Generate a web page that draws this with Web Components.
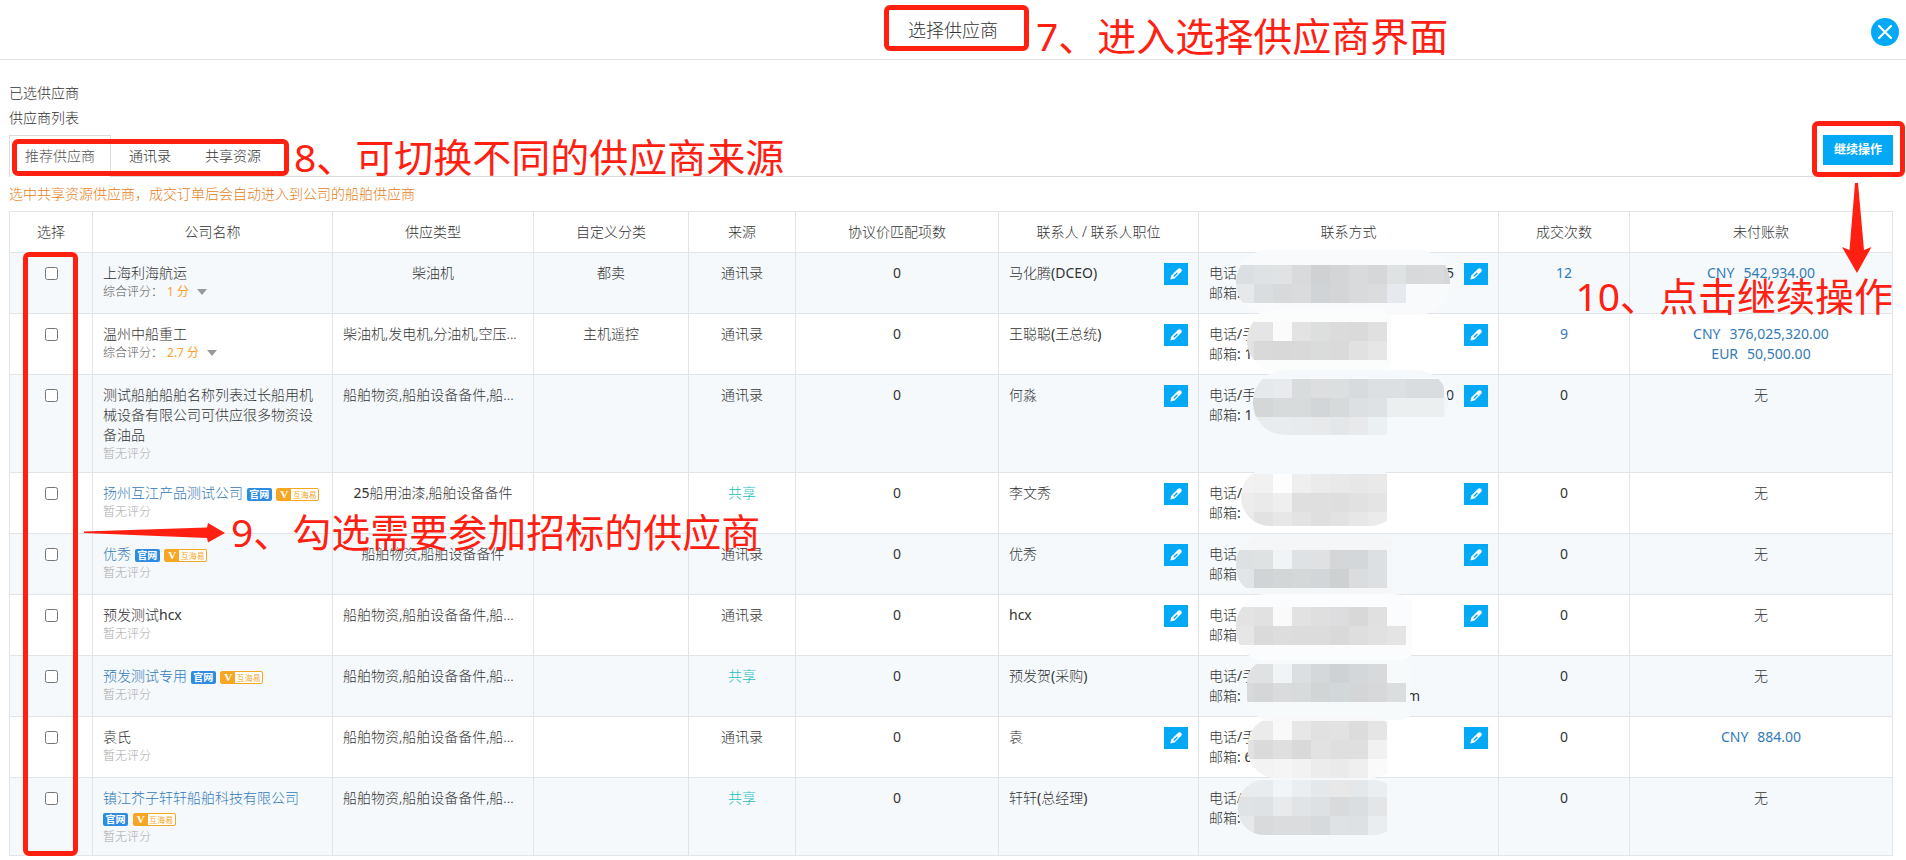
<!DOCTYPE html>
<html lang="zh-CN">
<head>
<meta charset="utf-8">
<meta name="viewport" content="width=device-width, initial-scale=1">
<title>选择供应商</title>
<style>
  body {
    margin: 0;
    background: #fff;
    color: #333;
    font-family: "Noto Sans", "Noto Sans CJK SC", sans-serif;
    font-size: 14px;
    font-weight: 300;
    line-height: 20px;
  }
</style>
</head>
<body>
<supplier-page></supplier-page>

<script>
const define = (name, html, setup) => {
  const tpl = document.createElement('template');
  tpl.innerHTML = html;
  customElements.define(name, class extends HTMLElement {
    constructor() {
      super();
      this.attachShadow({ mode: 'open' }).append(tpl.content.cloneNode(true));
    }
    connectedCallback() {
      if (setup && !this.ready) { this.ready = true; setup(this, this.shadowRoot); }
    }
  });
};

/* Tutorial marks: frame, caption and arrow laid over the page */
define('mark-frame', `
<style>
  :host { position: absolute; box-sizing: border-box; border: 5px solid #ff2012; border-radius: 6px; pointer-events: none; z-index: 2; }
</style>`);

define('mark-caption', `
<style>
  :host { position: absolute; z-index: 3; color: #ff2012; font-size: 39px; line-height: 46px; font-weight: 400; white-space: nowrap; pointer-events: none; }
</style><slot></slot>`);

define('mark-arrow', `
<style>
  :host { position: absolute; z-index: 3; pointer-events: none; }
  svg { display: block; }
  :host([down]) .right, :host(:not([down])) .down { display: none; }
</style>
<svg class="right" width="142" height="20" viewBox="0 0 142 20"><path d="M0 8.5 L123 4.500 L124 0 L141 10 L124 19.500 L123 15 L0 10 Z" fill="#ff2012"/></svg>
<svg class="down" width="30" height="90" viewBox="0 0 30 90"><path d="M13 0 H16 L22 67 L29.500 64 L15 90 L0 64 L7.500 67 Z" fill="#ff2012"/></svg>`);

define('edit-button', `
<style>
  :host { display: block; flex: none; }
  button { display: flex; align-items: center; justify-content: center; width: 24px; height: 22px; padding: 0; border: 0; background: #03a9f4; color: #fff; cursor: pointer; }
</style>
<button type="button" aria-label="编辑">
  <svg width="12" height="12" viewBox="0 0 12 12">
    <path d="M.3 11.600 L1.300 7.600 L7.800 1 Q9.600 -.4 11.200 1 Q12.400 2.600 11 4 L4.500 10.400 Z" fill="currentColor"/>
    <path d="M4.200 7.900 L7 5.200" stroke="#03a9f4" stroke-width="1.400" stroke-linecap="round"/>
  </svg>
</button>`);

define('site-badge', `
<style>
  :host { display: inline-block; vertical-align: middle; }
  a { display: block; box-sizing: border-box; width: 25px; height: 13px; border-radius: 2px; background: #2d8ce2; color: #fff; font-size: 10px; line-height: 13px; font-weight: 700; text-align: center; text-decoration: none; }
</style><a href="#"><slot></slot></a>`);

define('trade-badge', `
<style>
  :host { display: inline-block; vertical-align: middle; margin-left: 1px; }
  a { display: flex; box-sizing: border-box; width: 43px; height: 13px; border: 1px solid #f6a623; border-radius: 2px; color: #f6a623; background: #fff; font-size: 8px; line-height: 11px; font-weight: 400; text-decoration: none; }
  b { width: 14px; background: #f6a623; color: #fff; font: 700 11px/11px "Liberation Serif", serif; text-align: center; }
  span { flex: 1; text-align: center; }
</style><a href="#"><b>V</b><span><slot></slot></span></a>`);

/* Mosaic that covers private contact details; squares are 19px */
const CELL = 19;
const MOSAICS = [
  { x: 37, y: -3, w: 214, h: 65, r: 32, top: 12, bg: '#f8fafb', rows: [
    'dbdfe2 dfe2e4 e0e2e4 d9dadc cfd1d3 d4d5d7 d9dadc d6d7d9 dfe2e3 d8d9db d9dadb d5d6d8'.split(' '),
    'e6e8ea dadddf d8d9da dadbdc d1d4d6 d4d5d7 d9dadc dadcde e6eaee'.split(' ')] },
  { x: 48, y: 56, w: 144, h: 63, r: 32, top: 69, bg: '#fbfcfc', rows: [
    'e5e5e5 e5e5e5 fbfbfb e3e3e4 dddede dbdbdb dadadb e0e0e0'.split(' '),
    'e2e2e2 d9d9da d8d8d9 d9d9d9 dadbdb dadadb e1e1e1 e6e6e6'.split(' ')] },
  { x: 54, y: 117, w: 195, h: 65, r: 32, top: 126, bg: '#f6f9fb', rows: [
    'e6e9eb e6e9eb e8eaed d9dcdd dcdedf dcdfe0 d8dbdd dce0e2 dde0e2 dadddf dadddf'.split(' '),
    'd5d6d8 d5d6d8 d8dbdc d8dbdc d3d6d8 d7dadb dce0e3 dfe2e4 ebeff0 ebeff0 ebeff0 f2f5f7'.split(' '),
    'e7ebee e8ecef e8ecef e7ebee e7e9eb e3e7ea e7e9eb ebf0f3'.split(' ')] },
  { x: 42, y: 215, w: 146, h: 58, r: 29, top: 221, bg: '#f6f9fb', rows: [
    'f2f2f2 f1f1f1 fdfdfd efefef ebebec e9e9ea e7e7e8 e9e9ea'.split(' '),
    'ececec eaeaea efefef dfdfdf dfdfdf dedede e1e1e1 e4e4e4'.split(' '),
    'eaeaea e2e2e2 e7e7e7 e3e3e3 dfdfdf e2e2e2 e7e7e7 ebebeb'.split(' ')] },
  { x: 37, y: 282, w: 156, h: 60, r: 28, top: 297, bg: '#f4f6f8', rows: [
    'dee1e3 dfe2e3 f0f4f7 dfe2e5 dfe1e3 d5d6d8 d4d7d9 dde0e2'.split(' '),
    'e1e5e8 d1d4d6 d3d6d7 d5d8d9 d3d6d8 cdd1d2 dadcde dde0e2'.split(' ')] },
  { x: 37, y: 341, w: 176, h: 68, r: 32, top: 354, bg: '#fbfcfd', rows: [
    'e3e3e3 e1e1e2 fafafa e2e2e3 dfdfe0 dddddf d8d8d9 e0e0e1'.split(' '),
    'e6e6e7 dadadb dddddd dcdcdd dcdcdd d9d9da dededf e1e1e2 e4e4e5'.split(' ')] },
  { x: 48, y: 407, w: 163, h: 60, r: 22, top: 411, bg: '#f7fafb', rows: [
    'dfe1e3 dfe1e3 f1f4f6 dbdfe1 d4d8da ced2d4 d4d7d9 d8d9db'.split(' '),
    'd7dadd d5d6d8 d9dbdd d8dbdc d2d5d6 d2d7d9 d3d5d7 d6d8da dadedf'.split(' ')] },
  { x: 49, y: 464, w: 139, h: 61, r: 28, top: 468, bg: '#f8f8f9', rows: [
    'ededed ebebeb f9f9f9 e7e7e7 e1e1e1 e2e2e2 dcdcdd e5e5e5'.split(' '),
    'e2e2e2 dadadb dfdfe0 d9d9d9 e2e2e2 dfdfdf dfdfe0 f1f1f1'.split(' '),
    'f4f4f4 f3f3f3 f5f5f5 f2f2f2 ececec eaeaea efefef fafafa'.split(' ')] },
  { x: 39, y: 527, w: 149, h: 55, r: 26, top: 525, bg: '#edf1f4', rows: [
    'e8ecef e8ecef f2f5f8 eaeef0 e5e8ea e8e8e9 e4e8ea ebeef1'.split(' '),
    'dfe3e6 dfe2e4 e8eaec e0e4e7 dee1e4 d9dadc dadee0 e3e5e6'.split(' '),
    'e5e9ec d9dadc dadcdd dbdcdd d6dadd dfe2e5 dde1e4 e9edf0'.split(' ')] }
];
/* y position of each body row within the table body, used to make mosaic offsets row-relative */
const ROW_TOPS = [0, 61, 122, 220, 281, 342, 403, 464, 525];

define('contact-mosaic', `
<style>
  :host { position: absolute; z-index: 1; pointer-events: none; }
  svg { display: block; }
</style><svg aria-hidden="true"></svg>`, (host, root) => {
  const i = +host.dataset.index, m = MOSAICS[i], svg = root.querySelector('svg');
  host.style.left = m.x + 'px';
  host.style.top = (m.y - ROW_TOPS[i]) + 'px';
  svg.setAttribute('width', m.w);
  svg.setAttribute('height', m.h);
  let out = `<clipPath id="c"><rect width="${m.w + (i === 0 || i === 2 ? 0 : 12)}" height="${m.h}" rx="${m.r}"/></clipPath><g clip-path="url(#c)"><rect width="${m.w}" height="${m.h}" fill="${m.bg}"/>`;
  m.rows.forEach((row, r) => row.forEach((c, k) => {
    out += `<rect x="${36 + k * CELL - m.x}" y="${m.top - m.y + r * CELL}" width="${CELL}" height="${CELL}" fill="#${c}" shape-rendering="crispEdges"/>`;
  }));
  svg.innerHTML = out + '</g>';
});

const SHIP = '船舶物资,船舶设备备件,船...';
const SUPPLIERS = [
  { name: '上海利海航运', score: '1', type: '柴油机', cat: '都卖', src: '通讯录', person: '马化腾(DCEO)', edit: 1, phone: '电话/', tail: '5', mail: '邮箱:', deals: '12', debt: [['CNY', '542,934.00']] },
  { name: '温州中船重工', score: '2.7', type: '柴油机,发电机,分油机,空压...', cat: '主机遥控', src: '通讯录', person: '王聪聪(王总统)', edit: 1, phone: '电话/手', mail: '邮箱: 1', deals: '9', debt: [['CNY', '376,025,320.00'], ['EUR', '50,500.00']] },
  { name: '测试船舶船舶名称列表过长船用机械设备有限公司可供应很多物资设备油品', type: SHIP, src: '通讯录', person: '何淼', edit: 1, phone: '电话/手', tail: '0', mail: '邮箱: 1', deals: '0' },
  { name: '扬州互江产品测试公司', link: 1, type: '25船用油漆,船舶设备备件', src: '共享', person: '李文秀', edit: 1, phone: '电话/', mail: '邮箱:', deals: '0' },
  { name: '优秀', link: 1, type: '船舶物资,船舶设备备件', src: '通讯录', person: '优秀', edit: 1, phone: '电话/', mail: '邮箱', deals: '0' },
  { name: '预发测试hcx', type: SHIP, src: '通讯录', person: 'hcx', edit: 1, phone: '电话/', mail: '邮箱', deals: '0' },
  { name: '预发测试专用', link: 1, type: SHIP, src: '共享', person: '预发贺(采购)', phone: '电话/手', mail: '邮箱:', mailTail: 'm', deals: '0' },
  { name: '袁氏', type: SHIP, src: '通讯录', person: '袁', edit: 1, phone: '电话/手', mail: '邮箱: 6', deals: '0', debt: [['CNY', '884.00']] },
  { name: '镇江芥子轩轩船舶科技有限公司', link: 1, type: SHIP, src: '共享', person: '轩轩(总经理)', phone: '电话/', mail: '邮箱:', deals: '0' }
];

/* Latin letters and digits are drawn at regular weight beside the light Chinese text */
const latin = t => t.replace(/[A-Za-z0-9():/]+/g, '<em>$&</em>');

define('supplier-table', `
<style>
  :host { display: block; position: relative; }
  table { width: 100%; table-layout: fixed; border-collapse: collapse; }
  th, td { box-sizing: border-box; border: 1px solid #e1e5e8; padding: 10px; vertical-align: top; text-align: center; font-weight: inherit; }
  tbody tr:nth-child(odd) { background: #f5f9fc; }
  em { font-style: normal; font-weight: 400; }
  td.left { text-align: left; }
  td.type { white-space: nowrap; }
  td.type.cut { text-align: left; }
  td.contact { position: relative; }
  input { display: block; width: 13px; height: 13px; margin: 4px auto; }
  a { color: #337ab7; text-decoration: none; }
  .share { color: #1dbfbf; }
  .score, .none { font-size: 12px; line-height: 17px; }
  .score { display: flex; align-items: center; color: #555; }
  .score b { margin-left: 4px; font-weight: 400; color: #f9a02c; }
  .score i { margin-left: 8px; border: 5px solid transparent; border-top: 6px solid #999; border-bottom: 0; }
  .none { color: #aaa; }
  .side { display: flex; justify-content: space-between; gap: 10px; }
  .lines { flex: 1; }
  .line { display: flex; }
  .tail { margin-left: auto; }
  .mailtail { margin-left: auto; margin-right: 68px; }
  .debt { display: flex; justify-content: center; gap: 9px; }
</style>
<table>
  <colgroup><col style="width:83px"><col style="width:240px"><col style="width:201px"><col style="width:155px"><col style="width:107px"><col style="width:203px"><col style="width:200px"><col style="width:300px"><col style="width:131px"><col style="width:263px"></colgroup>
  <thead><tr><th>选择</th><th>公司名称</th><th>供应类型</th><th>自定义分类</th><th>来源</th><th>协议价匹配项数</th><th>联系人 / 联系人职位</th><th>联系方式</th><th>成交次数</th><th>未付账款</th></tr></thead>
  <tbody></tbody>
</table>
<slot></slot>`, (host, root) => {
  root.querySelector('tbody').innerHTML = SUPPLIERS.map((s, i) => `<tr>
    <td><input type="checkbox" aria-label="选择${s.name}"></td>
    <td class="left">${s.link ? `<a href="#">${s.name}</a> <site-badge>官网</site-badge> <trade-badge>互海易</trade-badge>` : latin(s.name)}
      ${s.score ? `<div class="score">综合评分：<b>${s.score} 分</b><i></i></div>` : '<div class="none">暂无评分</div>'}</td>
    <td class="type ${s.type.endsWith('...') ? 'cut' : ''}">${latin(s.type)}</td>
    <td>${s.cat || ''}</td>
    <td>${s.src === '共享' ? '<span class="share">共享</span>' : s.src}</td>
    <td><em>0</em></td>
    <td class="left"><div class="side"><span>${latin(s.person)}</span>${s.edit ? '<edit-button></edit-button>' : ''}</div></td>
    <td class="left contact"><div class="side"><div class="lines">
      <div class="line"><span>${latin(s.phone)}</span>${s.tail ? `<em class="tail">${s.tail}</em>` : ''}</div>
      <div class="line"><span>${latin(s.mail)}</span>${s.mailTail ? `<em class="mailtail">${s.mailTail}</em>` : ''}</div>
      </div>${s.edit ? '<edit-button></edit-button>' : ''}</div><contact-mosaic data-index="${i}"></contact-mosaic></td>
    <td>${s.deals === '0' ? '<em>0</em>' : `<a href="#"><em>${s.deals}</em></a>`}</td>
    <td>${s.debt ? s.debt.map(d => `<a class="debt" href="#"><em>${d[0]}</em><em>${d[1]}</em></a>`).join('') : '无'}</td>
  </tr>`).join('');
});

define('page-header', `
<style>
  :host { display: flex; align-items: center; justify-content: center; position: relative; height: 59px; border-bottom: 1px solid #dfe1e3; }
  h1 { margin: 0; font-size: 18px; line-height: 24px; font-weight: inherit; }
  button { position: absolute; right: 7px; top: 18px; width: 28px; height: 28px; padding: 0; border: 0; border-radius: 50%; background: #03a9f4; cursor: pointer; }
  svg { display: block; margin: auto; }
  mark-frame { left: 50%; margin-left: -69px; top: 5px; width: 145px; height: 46px; }
  mark-caption { left: 50%; margin-left: 83px; top: 13px; }
</style>
<h1><slot></slot></h1>
<button type="button" aria-label="关闭"><svg width="14" height="14" viewBox="0 0 14 14"><path d="M1 1 L13 13 M13 1 L1 13" stroke="#fff" stroke-width="2.200" stroke-linecap="round"/></svg></button>
<mark-frame></mark-frame>
<mark-caption>7、进入选择供应商界面</mark-caption>`);

define('source-tabs', `
<style>
  :host { display: flex; position: relative; height: 41px; border-bottom: 1px solid #d9dbdd; }
  nav { display: flex; gap: 2px; }
  a { box-sizing: border-box; height: 41px; padding: 10px 15px; border: 1px solid transparent; border-bottom: 0; color: #333; text-decoration: none; }
  a[aria-current] { height: 42px; border-color: #d9dbdd; background: #fff; color: #555; }
  .go { margin-left: auto; position: relative; }
  button { display: block; width: 70px; height: 30px; padding: 0; border: 0; background: #03a9f4; color: #fff; font: inherit; font-size: 12px; font-weight: 700; cursor: pointer; }
  .tabs-frame { left: 3px; top: 4px; width: 277px; height: 37px; }
  .tabs-caption { left: 285px; top: -1px; }
  .go-frame { left: -11px; top: -14px; width: 93px; height: 56px; }
  .go-arrow { left: 19px; top: 48px; }
  .go-caption { right: 0; top: 138px; }
</style>
<nav><a href="#" aria-current="page">推荐供应商</a><a href="#">通讯录</a><a href="#">共享资源</a></nav>
<div class="go"><button type="button">继续操作</button>
  <mark-frame class="go-frame"></mark-frame><mark-arrow class="go-arrow" down></mark-arrow><mark-caption class="go-caption">10、点击继续操作</mark-caption></div>
<mark-frame class="tabs-frame"></mark-frame>
<mark-caption class="tabs-caption">8、可切换不同的供应商来源</mark-caption>`);

define('supplier-page', `
<style>
  :host { display: block; }
  main { padding: 20px 13px 2px 9px; }
  h2 { margin: 0; font-size: 14px; line-height: 25px; font-weight: inherit; }
  source-tabs { margin-top: 5px; }
  p { margin: 0; line-height: 34px; color: #e67e22; }
  .pick-frame { left: 14px; top: 41px; bottom: 0; width: 55px; }
  .pick-arrow { left: 75px; top: 312px; }
  .pick-caption { left: 222px; top: 298px; }
</style>
<page-header>选择供应商</page-header>
<main>
  <h2>已选供应商</h2>
  <h2>供应商列表</h2>
  <source-tabs></source-tabs>
  <p>选中共享资源供应商，成交订单后会自动进入到公司的船舶供应商</p>
  <supplier-table>
    <mark-frame class="pick-frame"></mark-frame>
    <mark-arrow class="pick-arrow"></mark-arrow>
    <mark-caption class="pick-caption">9、勾选需要参加招标的供应商</mark-caption>
  </supplier-table>
</main>`);
</script>
</body>
</html>
